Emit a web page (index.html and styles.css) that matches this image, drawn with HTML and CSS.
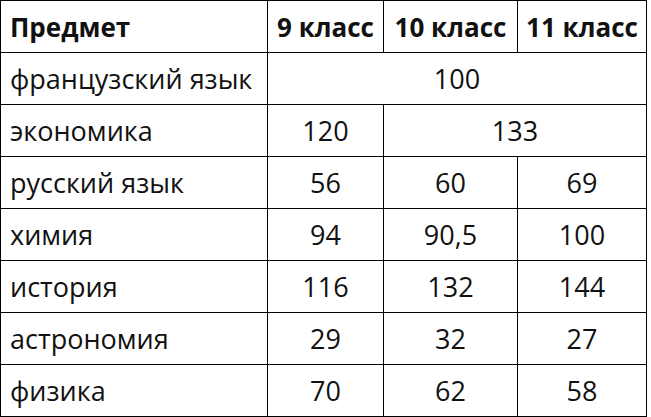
FILE: index.html
```html
<!DOCTYPE html>
<html lang="ru">
<head>
<meta charset="utf-8">
<link rel="stylesheet" href="styles.css">
</head>
<body>
<table class="grades">
  <colgroup>
    <col class="c-subj">
    <col class="c-9">
    <col class="c-10">
    <col class="c-11">
  </colgroup>
  <thead>
    <tr><th class="subj">Предмет</th><th>9 класс</th><th>10 класс</th><th>11 класс</th></tr>
  </thead>
  <tbody>
    <tr><td class="subj">французский язык</td><td colspan="3">100</td></tr>
    <tr><td class="subj">экономика</td><td>120</td><td colspan="2">133</td></tr>
    <tr><td class="subj">русский язык</td><td>56</td><td>60</td><td>69</td></tr>
    <tr><td class="subj">химия</td><td>94</td><td>90,5</td><td>100</td></tr>
    <tr><td class="subj">история</td><td>116</td><td>132</td><td>144</td></tr>
    <tr><td class="subj">астрономия</td><td>29</td><td>32</td><td>27</td></tr>
    <tr><td class="subj">физика</td><td>70</td><td>62</td><td>58</td></tr>
  </tbody>
</table>
</body>
</html>
```
FILE: styles.css
```css
html, body {
  margin: 0;
  padding: 0;
  background: #fff;
}
.grades {
  border-collapse: collapse;
  table-layout: fixed;
  width: 646px;
  font-family: "Open Sans", "Noto Sans", sans-serif;
  font-size: 27px;
  color: #111;
}
.c-subj { width: 267px; }
.c-9 { width: 116px; }
.c-10 { width: 134px; }
.c-11 { width: 129px; }
.grades th, .grades td {
  border: 1.5px solid #000;
  height: 52px;
  padding: 0;
  text-align: center;
  vertical-align: middle;
  white-space: nowrap;
  box-sizing: border-box;
}
.grades th {
  font-weight: 700;
  font-size: 26px;
}
.grades .subj {
  text-align: left;
  padding-left: 9px;
}
```
